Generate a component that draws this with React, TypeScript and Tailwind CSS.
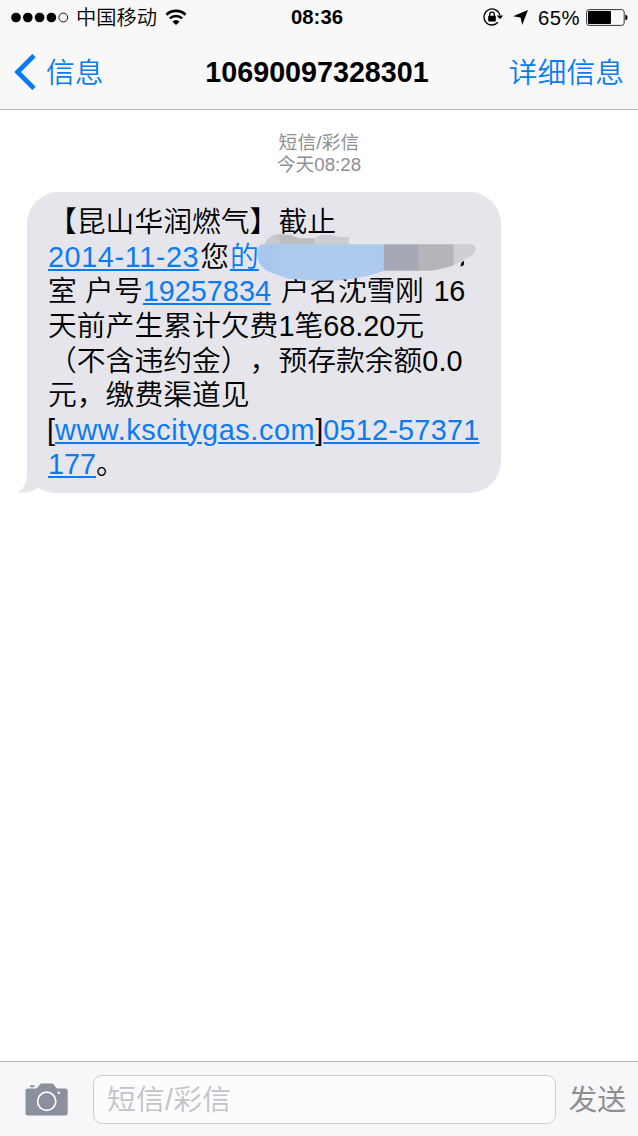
import type { ReactNode } from 'react';

interface Segment {
  text: string;
  link?: boolean;
  className?: string;
}

const message: Segment[][] = [
  [{ text: '【昆山华润燃气】截止' }],
  [
    { text: '2014-11-23', link: true, className: 'tracking-[0.6px]' },
    { text: '您', className: 'mx-[1px]' },
    { text: '的', link: true },
  ],
  [
    { text: '室 户号', className: 'tracking-[0.1px]' },
    { text: '19257834', link: true },
    { text: ' 户名沈雪刚 16', className: '[word-spacing:2px] tracking-[-0.2px]' },
  ],
  [{ text: '天前产生累计欠费1笔68.20元' }],
  [{ text: '（不含违约金），预存款余额0.0' }],
  [{ text: '元，缴费渠道见' }],
  [
    { text: '[', className: '-ml-px' },
    { text: 'www.kscitygas.com', link: true, className: 'tracking-[0.62px]' },
    { text: ']' },
    { text: '0512-57371', link: true, className: 'tracking-[0.25px]' },
  ],
  [{ text: '177', link: true }, { text: '。' }],
];

function Link({ children, className = '' }: { children: ReactNode; className?: string }) {
  return (
    <span className={`text-[#0b7bf3] underline decoration-[1.5px] underline-offset-[2px] ${className}`}>
      {children}
    </span>
  );
}

function WifiIcon() {
  return (
    <svg className="w-[22px] h-[17px]" viewBox="0 0 22 17" fill="none" stroke="#000" strokeWidth="2.6">
      <path d="M1.4 5.7a14 14 0 0 1 19.2 0" />
      <path d="M4.9 9.4a9 9 0 0 1 12.2 0" />
      <path d="M11 16 7.3 12.4a5.3 5.3 0 0 1 7.4 0Z" fill="#000" stroke="none" />
    </svg>
  );
}

function RotationLockIcon() {
  return (
    <svg className="w-[21px] h-[18px]" viewBox="0 0 21 18">
      <path d="M16.8 7.2A8 8 0 1 0 15 14.3" fill="none" stroke="#000" strokeWidth="1.3" />
      <path d="M13.8 7.4h6.4L17 11.3Z" />
      <rect x="5.2" y="7.8" width="7.6" height="5.6" rx="0.6" />
      <path d="M6.7 8V6.4a2.3 2.3 0 0 1 4.6 0V8" fill="none" stroke="#000" strokeWidth="1.3" />
    </svg>
  );
}

function StatusBar() {
  return (
    <div className="grid grid-cols-[1fr_auto_1fr] items-center h-[35px] pl-[11px] pr-[10px] text-[20.3px] leading-none">
      <div className="flex items-center">
        <svg className="w-[58px] h-[11px]" viewBox="0 0 58 11">
          <circle cx="5" cy="5.5" r="4.8" />
          <circle cx="16.8" cy="5.5" r="4.8" />
          <circle cx="28.6" cy="5.5" r="4.8" />
          <circle cx="40.4" cy="5.5" r="4.8" />
          <circle cx="52.3" cy="5.5" r="4.4" fill="none" stroke="#000" strokeWidth="0.9" />
        </svg>
        <span className="ml-[7px] mr-2 pt-[2px] font-[350]">中国移动</span>
        <WifiIcon />
      </div>
      <span className="mr-[5px] font-bold">08:36</span>
      <div className="flex items-center justify-end">
        <RotationLockIcon />
        <svg className="w-[15px] h-[15px] ml-[9px] mr-[10px]" viewBox="0 0 15 15">
          <path d="M15 0 9.2 15 7.6 7.4 0 6.2Z" />
        </svg>
        <span className="pt-px tracking-[0.5px]">65%</span>
        <svg className="w-[42px] h-[17px] ml-[6px]" viewBox="0 0 42 17">
          <rect x="0.6" y="0.6" width="37.6" height="15.8" rx="2.6" fill="none" stroke="#333" strokeWidth="1" />
          <rect x="2" y="2" width="23" height="13" rx="1" />
          <path d="M39.3 5.8q2.2 0 2.2 2.7t-2.2 2.7Z" />
        </svg>
      </div>
    </div>
  );
}

function NavBar() {
  return (
    <div className="grid grid-cols-[1fr_auto_1fr] items-center h-[74px] pl-[14px] pr-[14px] text-[28.8px] leading-none">
      <div className="flex items-center text-[#0b7bf3]">
        <svg className="w-[22px] h-[36px]" viewBox="0 0 22 36" fill="none" stroke="currentColor" strokeWidth="4.8">
          <path d="M20 1.6 3.6 18 20 34.4" />
        </svg>
        <span className="ml-[10px] pt-[2px] font-[350]">信息</span>
      </div>
      <span className="mr-[4px] font-bold text-[28.7px]">10690097328301</span>
      <span className="justify-self-end pt-[2px] font-[350] text-[#0b7bf3]">详细信息</span>
    </div>
  );
}

// Smudge painted over the address part of the message
function Redaction() {
  return (
    <svg className="absolute left-[213px] top-[41px] w-[270px] h-[52px]" viewBox="0 144 810 156">
      <path d="M74 182C78 160 100 147 124 148L150 150 178 160H222V182Z" fill="#bcbcc2" />
      <path d="M74 182C78 160 100 147 118 148V182Z" fill="#c9c8ce" />
      <path d="M222 182V163L240 151 270 149 300 156H326V182Z" fill="#cdccd2" />
      <path d="M640 178H690Q707 178 707 190 706 202 692 214L640 241Z" fill="#cfced3" />
      <path d="M535 178H641V241Q610 253 570 257H535Z" fill="#b5b4b9" />
      <path d="M430 178H536V257H430Z" fill="#a4a9b5" />
      <path
        d="M431 178H68Q52 182 52 200C52 222 55 243 88 260Q110 268 142 280C210 289 290 290 355 278Q400 270 431 257Z"
        fill="#adcaef"
      />
      <path d="M68 178Q52 182 52 200C52 222 55 243 88 260L119 271V178Z" fill="#a8c7ef" />
      <path d="M665 231 672 227V239L667 244H661Z" fill="#16161c" />
    </svg>
  );
}

function MessageBubble() {
  return (
    <div className="relative ml-[27px] w-[474px] h-[301px] rounded-[32px] bg-[#e5e5eb] pt-[13px] pl-[21px] text-[28.8px] font-[350] [text-spacing-trim:space-all]">
      <svg className="absolute -left-[9px] bottom-0 w-[42px] h-[34px]" viewBox="0 0 42 34" fill="#e5e5eb">
        <path d="M9 0V14Q9 29 0 33 11 35 20 28.5 28 34 42 34V0Z" />
      </svg>
      {message.map((line, i) => (
        <div key={i} className="relative h-[34.65px] leading-[34.65px] whitespace-pre">
          {line.map((part, j) =>
            part.link ? (
              <Link key={j} className={part.className}>{part.text}</Link>
            ) : (
              <span key={j} className={part.className}>{part.text}</span>
            )
          )}
        </div>
      ))}
      <Redaction />
    </div>
  );
}

function InputBar() {
  return (
    <div className="flex items-center h-[75px] pl-[25px] pr-[12px] border-t border-[#b4b5b9] bg-[#f7f7f9] text-[28.8px] leading-none">
      <svg className="w-[43px] h-[33px] shrink-0" viewBox="0 0 43 33">
        <path
          d="M3 5.5H10Q12 5.5 13 4L14.7 1.5Q15.5.5 17 .5H26.5Q28 .5 28.8 1.5L30.5 4Q31.5 5.5 33 5.5H40Q42.7 5.5 42.7 8V30Q42.7 32.5 40 32.5H3Q.5 32.5.5 30V8Q.5 5.5 3 5.5Z"
          fill="#8a919d"
        />
        <rect x="5" y="2.2" width="4.6" height="2" rx="1" fill="#8a919d" />
        <circle cx="21.7" cy="18.3" r="9.1" fill="none" stroke="#fff" strokeWidth="1.7" />
        <circle cx="33.8" cy="9.8" r="1.3" fill="#fff" />
      </svg>
      <div className="flex items-center w-[463px] h-[49px] ml-[25px] pt-[2px] pl-[13px] rounded-[9px] border border-[#cccdd2] bg-[#fcfcfd] font-[350] text-[#c3c3c9] tracking-[0.2px]">
        短信/彩信
      </div>
      <span className="ml-auto pt-[2px] text-[#8e8e93]">发送</span>
    </div>
  );
}

export default function App() {
  return (
    <div className="flex flex-col w-[638px] h-[1136px] overflow-hidden bg-white text-black font-['Liberation_Sans','Noto_Sans_CJK_SC',sans-serif]">
      <header className="h-[110px] border-b border-[#b9b9bc] bg-[#f8f8f8]">
        <StatusBar />
        <NavBar />
      </header>
      <main className="flex-1">
        <div className="pt-[22px] h-[82px] text-center text-[#8e8e93] text-[18.7px] leading-[22px]">
          <p className="tracking-[0.2px]">短信/彩信</p>
          <p>今天08:28</p>
        </div>
        <MessageBubble />
      </main>
      <InputBar />
    </div>
  );
}
